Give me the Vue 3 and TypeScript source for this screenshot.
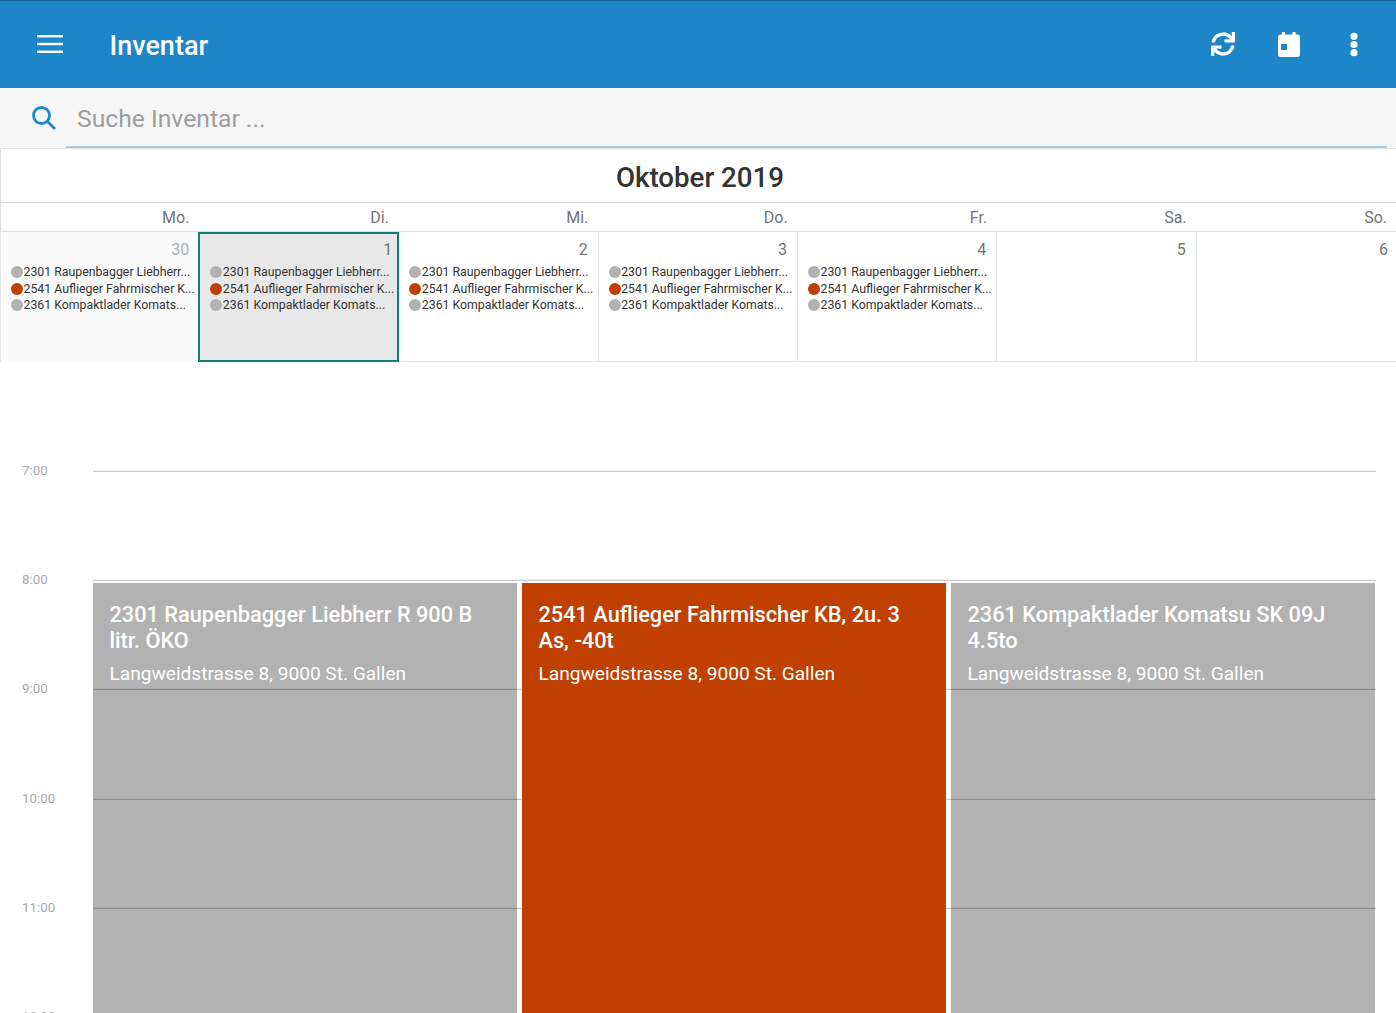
<script setup lang="ts">
interface Day { n: number; label: string; items: boolean; cls?: string }
const days: Day[] = [
  { n: 30, label: 'Mo.', items: true, cls: 'muted' },
  { n: 1, label: 'Di.', items: true, cls: 'selected' },
  { n: 2, label: 'Mi.', items: true },
  { n: 3, label: 'Do.', items: true },
  { n: 4, label: 'Fr.', items: true },
  { n: 5, label: 'Sa.', items: false },
  { n: 6, label: 'So.', items: false },
]
const entries = [
  { t: '2301 Raupenbagger Liebherr...', c: 'grey' },
  { t: '2541 Auflieger Fahrmischer K...', c: 'orange' },
  { t: '2361 Kompaktlader Komats...', c: 'grey' },
]
const hours = ['7:00', '8:00', '9:00', '10:00', '11:00', '12:00']
const events = [
  { t: '2301 Raupenbagger Liebherr R 900 B litr. ÖKO', c: 'grey' },
  { t: '2541 Auflieger Fahrmischer KB, 2u. 3 As, -40t', c: 'orange' },
  { t: '2361 Kompaktlader Komatsu SK 09J 4.5to', c: 'grey' },
]
</script>

<template>
  <div class="page">
    <header class="bar">
      <svg class="menu" width="28" height="20" viewBox="0 0 28 20" fill="#fff">
        <rect x="1" y="1" width="26" height="2.4" /><rect x="1" y="8.8" width="26" height="2.4" /><rect x="1" y="16.6" width="26" height="2.4" />
      </svg>
      <h1>Inventar</h1>
      <div class="actions">
        <svg width="24" height="24" viewBox="0 0 512 512" fill="#fff"><path d="M440.65 12.57l4 82.77A247.16 247.16 0 0 0 255.83 8C134.73 8 33.91 94.92 12.29 209.82A12 12 0 0 0 24.09 224h49.05a12 12 0 0 0 11.67-9.26 175.91 175.91 0 0 1 317-56.94l-101.46-4.86a12 12 0 0 0-12.57 12v47.41a12 12 0 0 0 12 12H500a12 12 0 0 0 12-12V12a12 12 0 0 0-12-12h-47.37a12 12 0 0 0-11.98 12.57zM255.83 432a175.61 175.61 0 0 1-146-77.8l101.8 4.87a12 12 0 0 0 12.57-12v-47.4a12 12 0 0 0-12-12H12a12 12 0 0 0-12 12V500a12 12 0 0 0 12 12h47.35a12 12 0 0 0 12-12.6l-4.15-82.57A247.17 247.17 0 0 0 255.83 504c121.11 0 221.93-86.92 243.55-201.82a12 12 0 0 0-11.8-14.18h-49.05a12 12 0 0 0-11.67 9.26A175.86 175.86 0 0 1 255.83 432z"/></svg>
        <svg class="cal" width="22" height="25" viewBox="0 0 22 25" fill="#fff"><path d="M4 0h3v2.500h7.500V0h3v2.500h2A2.500 2.500 0 0 1 22 5v17.500a2.500 2.500 0 0 1-2.500 2.500h-17A2.500 2.500 0 0 1 0 22.500V5a2.500 2.500 0 0 1 2.500-2.500H4zM3 12v6h6v-6z" fill-rule="evenodd"/></svg>
        <svg class="dots" width="8" height="25" viewBox="0 0 8 25" fill="#fff"><circle cx="4" cy="4.300" r="3.600"/><circle cx="4" cy="12.500" r="3.600"/><circle cx="4" cy="20.700" r="3.600"/></svg>
      </div>
    </header>

    <div class="search">
      <svg class="lens" width="28" height="28" viewBox="0 0 28 28" fill="none" stroke="#1e88ca" stroke-width="2.800">
        <circle cx="11.500" cy="11.500" r="8" /><path d="M17.500 17.500L25 25" />
      </svg>
      <div class="field">Suche Inventar ...</div>
    </div>

    <section class="calendar">
      <div class="month">Oktober 2019</div>
      <div class="week">
        <div v-for="d in days" :key="d.label" class="wd">{{ d.label }}</div>
      </div>
      <div class="cells">
        <div v-for="d in days" :key="d.n" class="cell" :class="d.cls">
          <div class="num">{{ d.n }}</div>
          <template v-if="d.items">
            <div v-for="e in entries" :key="e.t" class="entry">
              <span class="dot" :class="e.c"></span><span>{{ e.t }}</span>
            </div>
          </template>
        </div>
      </div>
    </section>

    <section class="timeline">
      <div v-for="h in hours" :key="h" class="hour">
        <span class="time">{{ h }}</span>
        <span class="rule"></span>
      </div>
      <div class="events">
        <div v-for="ev in events" :key="ev.t" class="event" :class="ev.c">
          <div class="ev-title">{{ ev.t }}</div>
          <div class="ev-sub">Langweidstrasse 8, 9000 St. Gallen</div>
        </div>
      </div>
    </section>
  </div>
</template>

<style>
html, body { margin: 0; background: #fff; overflow: hidden; }
</style>

<style scoped>
.page {
  width: 1396px; height: 1013px; overflow: hidden;
  font-family: Roboto, "Liberation Sans", sans-serif; background: #fff;
}
.bar {
  height: 87px; border-top: 1px solid #14649a; background: #1d86c8;
  display: flex; align-items: center; color: #fff; box-sizing: content-box;
}
.menu { margin-left: 36px; margin-top: -2px; }
.bar h1 { margin: 2px 0 0 45.500px; font-size: 27px; font-weight: 500; line-height: 32px; }
.actions { margin-left: auto; display: flex; align-items: center; margin-right: 38px; gap: 42px; margin-top: -1px; }
.actions svg:first-child { margin-right: 1px; margin-top: -1px; }
.dots { margin-left: 8px; }
.search {
  height: 60px; background: #f6f6f6; display: flex; align-items: flex-start;
  box-sizing: border-box; position: relative;
}
.lens { margin: 16px 0 0 30px; }
.field {
  margin-left: 8px; width: 1321px; height: 60px; box-sizing: border-box;
  border-bottom: 2px solid #a0cde8; color: #9e9e9e; font-size: 24.700px; line-height: 62px; padding-left: 11px;
}
.calendar { box-shadow: inset 1px 0 0 #e0e0e0; border-top: 1px solid #e4e4e4; }
.month {
  height: 54px; border-bottom: 1px solid #dcdcdc; text-align: center; font-size: 27.700px; font-weight: 500;
  color: #333; line-height: 57px; box-sizing: border-box; padding-left: 4px;
}
.week { display: grid; grid-template-columns: repeat(7, 1fr); height: 29px; border-bottom: 1px solid #e0e0e0; box-sizing: border-box; }
.wd { text-align: right; padding-right: 10px; font-size: 16px; color: #757575; line-height: 29px; }
.wd:last-child { padding-right: 9px; }
.cells { display: grid; grid-template-columns: repeat(7, 1fr); height: 130px; border-bottom: 1px solid #e4e4e4; box-sizing: border-box; }
.cell { box-sizing: border-box; border-right: 1px solid #e4e4e4; padding: 8px 0 0 10px; overflow: hidden; white-space: nowrap; min-width: 0; }
.cell:first-child { border-left: 1px solid #e4e4e4; }
.cell:last-child { border-right: 0; }
.cell:last-child .num { padding-right: 8px; }
.cell.muted { background: #fafafa; }
.cell.muted .num { color: #adadad; padding-right: 9px; }
.cell.selected { background: #e8e8e8; border: 2px solid #12806f; height: 130px; padding: 6px 0 0 10px; margin-left: -1px; width: 201px; }
.cell.selected .num { padding-right: 5px; }
.num { text-align: right; font-size: 16px; line-height: 20px; color: #757575; padding-right: 10px; margin-bottom: 4px; }
.entry { display: flex; align-items: center; height: 16.500px; font-size: 12.300px; color: #333; }
.dot { width: 12px; height: 12px; border-radius: 50%; margin-right: .5px; flex: none; }
.dot.grey { background: #b2b2b2; }
.dot.orange { background: #bf4000; }
.timeline { position: relative; height: 651px; padding-top: 108px; box-sizing: border-box; }
.hour { height: 109.200px; display: flex; align-items: flex-start; position: relative; }
.time { width: 93px; padding-left: 22px; box-sizing: border-box; font-size: 13.300px; line-height: 16px; color: #aaa; margin-top: -7px; flex: none; }
.rule { display: block; width: 1283px; height: 2px; background: linear-gradient(#eeeeee 50%, #cccccc 50%); }
.events {
  position: absolute; left: 93px; top: 221px; width: 1283px; height: 500px;
  display: grid; grid-template-columns: repeat(3, 424px); column-gap: 5px; z-index: 1;
}
.event { padding: 19px 16px 0 16.500px; color: #fff; box-sizing: border-box; }
.event.grey { background: rgba(0,0,0,.3); }
.event.orange { background: #bf4000; }
.ev-title { font-size: 21.750px; font-weight: 500; line-height: 26px; }
.ev-sub { font-size: 19.100px; line-height: 24px; margin-top: 8px; }
</style>
